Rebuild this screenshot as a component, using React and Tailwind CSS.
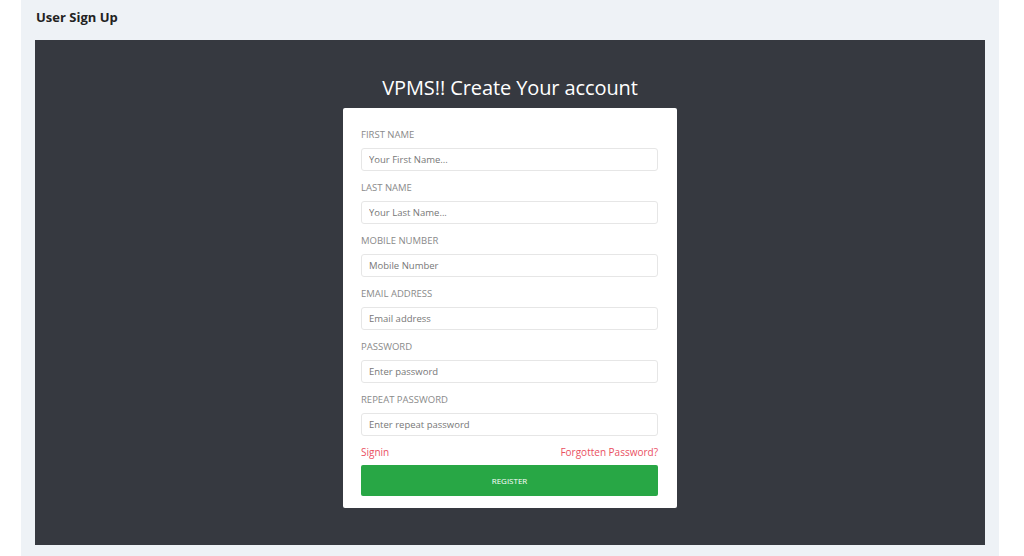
import React from 'react'

const FIELDS = [
  { label: 'FIRST NAME', placeholder: 'Your First Name...', type: 'text' },
  { label: 'LAST NAME', placeholder: 'Your Last Name...', type: 'text' },
  { label: 'MOBILE NUMBER', placeholder: 'Mobile Number', type: 'text' },
  { label: 'EMAIL ADDRESS', placeholder: 'Email address', type: 'email' },
  { label: 'PASSWORD', placeholder: 'Enter password', type: 'password' },
  { label: 'REPEAT PASSWORD', placeholder: 'Enter repeat password', type: 'password' },
]

export default function App() {
  return (
    <div className="min-h-[556px] bg-white pl-[21px] pr-[25px]">
      <div className="bg-[#eef2f6] min-h-[556px] pl-[14px] pr-[14px] pt-[9px]">
        <h2 className="text-[13px] font-bold text-[#222] leading-[16px] pl-px" style={{ fontFamily: '"Open Sans", "Liberation Sans", sans-serif' }}>
          User Sign Up
        </h2>

        <div className="mt-[15px] bg-[#363940] h-[505px] flex flex-col items-center pt-[35px]" style={{ fontFamily: '"Open Sans", sans-serif' }}>
          <h1 className="text-[20px] leading-[26px] text-white tracking-[-0.1px] mb-[7px]">VPMS!! Create Your account</h1>

          <div className="w-[334px] bg-white rounded-[2px] pl-[18px] pr-[19px] pt-[20px] pb-[12px]">
            <form onSubmit={e => e.preventDefault()}>
              {FIELDS.map(f => (
                <div key={f.label} className="mb-[10px]">
                  <label className="block text-[9.5px] leading-[13px] text-[#8a8a8a] mb-[7px]">{f.label}</label>
                  <input
                    type={f.type}
                    placeholder={f.placeholder}
                    className="block w-full h-[23px] border border-[#e6e6e6] rounded-[3px] px-[7px] text-[9.5px] text-[#555] placeholder:text-[#777] outline-none"
                  />
                </div>
              ))}

              <div className="flex justify-between text-[10px] leading-[13px] text-[#ea4f62] mt-[1px] mb-[6px]">
                <a href="#">Signin</a>
                <a href="#">Forgotten Password?</a>
              </div>

              <button type="submit" className="w-full h-[31px] bg-[#28a745] rounded-[2px] text-white text-[8px] font-medium">
                REGISTER
              </button>
            </form>
          </div>
        </div>
      </div>
    </div>
  )
}
